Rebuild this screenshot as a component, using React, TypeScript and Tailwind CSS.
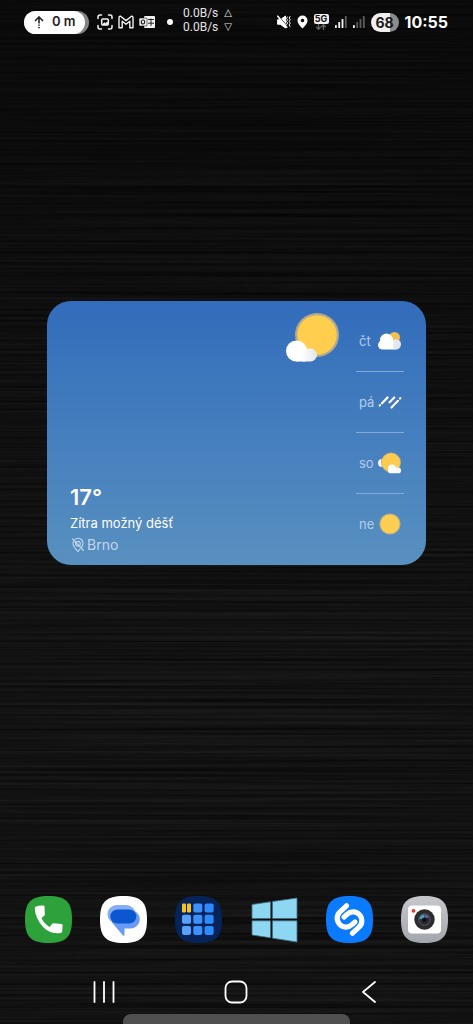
import type { ReactNode } from 'react';

function Wallpaper() {
  return (
    <svg className="absolute inset-0 -z-10 h-full w-full" aria-hidden="true">
      <defs>
        <filter id="brushed" x="0" y="0" width="100%" height="100%" colorInterpolationFilters="sRGB">
          <feTurbulence type="fractalNoise" baseFrequency="0.002 0.35" numOctaves="4" seed="7" />
          <feColorMatrix values="0.11 0 0 0 0.015  0.11 0 0 0 0.015  0.11 0 0 0 0.015  0 0 0 0 1" />
        </filter>
        <linearGradient id="shade" x1="0" y1="0" x2="0" y2="1">
          <stop offset="0" stopColor="#000" stopOpacity=".45" />
          <stop offset=".6" stopColor="#000" stopOpacity="0" />
        </linearGradient>
      </defs>
      <rect width="100%" height="100%" filter="url(#brushed)" />
      <rect width="100%" height="100%" fill="url(#shade)" />
    </svg>
  );
}

function CaptureIcon() {
  return (
    <svg width="16" height="16" viewBox="0 0 16 16" fill="none" stroke="#f2f2f2" strokeWidth="1.5" strokeLinecap="round">
      <path d="M1 4.5V3q0-2 2-2h1.5M11.500 1H13q2 0 2 2v1.500M15 11.500V13q0 2-2 2h-1.500M4.500 15H3q-2 0-2-2v-1.500" />
      <rect x="4.700" y="5" width="6.600" height="6" rx="1" />
      <path d="M6 10.200l1.500-1.500 1 .8 2-1.300v2z" fill="#f2f2f2" strokeWidth="1" />
    </svg>
  );
}

function MailIcon() {
  return (
    <svg width="16" height="14" viewBox="0 0 16 14" fill="none" stroke="#f2f2f2" strokeWidth="1.400" strokeLinejoin="round">
      <path d="M1 12.800V3Q1 1 2.600 1.300L8 5.600l5.400-4.300Q15 1 15 3v9.800h-3.200V6.300L8 9.300 4.200 6.300v6.500z" />
    </svg>
  );
}

function OutlookIcon() {
  return (
    <svg width="16" height="14" viewBox="0 0 16 14">
      <rect x="5" y="1" width="11" height="12" rx="1" fill="#f2f2f2" />
      <path d="M9 4.500h6M9 8.200h6M12 3.500v7.500" stroke="#222" strokeWidth="1" />
      <rect x="0" y="3" width="8" height="8" rx="1" fill="#f2f2f2" stroke="#111" strokeWidth=".6" />
      <ellipse cx="4" cy="7" rx="1.700" ry="2" fill="none" stroke="#222" strokeWidth="1.200" />
    </svg>
  );
}

function MuteIcon() {
  return (
    <svg width="14" height="14" viewBox="0 0 14 14" fill="none" stroke="#fff" strokeLinecap="round">
      <path d="M.8 4.800h2.400L8.500 1v12L3.200 9.200H.8z" fill="#fff" />
      <path d="M1.700 1l9 10.800" stroke="#111" strokeWidth="1" />
      <path d="M.8 1.200l9 11" strokeWidth="1.500" />
      <path d="M10.300 2l-.8 1.300 1 1.500-1 1.600 1 1.600-.8 1.500M13 1.500l-.8 1.600 1 1.700-1 1.700 1 1.700-1 1.700.8 1.600" strokeWidth="1" />
    </svg>
  );
}

function PinIcon() {
  return (
    <svg width="11" height="14" viewBox="0 0 11 14">
      <path fill="#fff" fillRule="evenodd" d="M5.500.5a5 5 0 0 1 5 5c0 3.200-3.300 6.300-5 8-1.700-1.700-5-4.800-5-8a5 5 0 0 1 5-5zm0 3.200a1.800 1.800 0 1 0 0 3.600 1.800 1.800 0 0 0 0-3.600z" />
    </svg>
  );
}

function NetworkBadge() {
  return (
    <span className="flex w-[15px] flex-col items-center">
      <span className="h-[10px] w-full rounded-xs bg-[#f2f2f2] text-center text-[9px] leading-[10px] font-bold text-[#111]">5G</span>
      <svg width="12" height="6" viewBox="0 0 12 6" fill="none" stroke="#666" strokeWidth="1.300">
        <path d="M3.500 0v5M1.200 3l2.300 2.300L5.800 3M8.500 6V1M6.200 3l2.300-2.300L10.800 3" />
      </svg>
    </span>
  );
}

function SignalIcon({ level }: { level: number }) {
  const bars = [3, 6, 9, 12];
  return (
    <svg width="12" height="12" viewBox="0 0 12 12">
      {bars.map((h, i) => (
        <rect key={h} x={i * 3.300} y={12 - h} width="1.800" height={h} rx=".6" fill={i < level ? '#f5f5f5' : '#5c5c5c'} />
      ))}
    </svg>
  );
}

function StatusBar() {
  return (
    <header className="flex h-11 items-center justify-between pr-[25px] pl-6 text-white">
      <div className="flex items-center">
        <div className="rounded-full bg-[#858585] pr-1">
          <div className="flex h-[23px] w-[61px] items-center gap-2 rounded-full bg-white pl-2.5 text-[#222]">
            <svg width="10" height="13" viewBox="0 0 10 13" fill="none" stroke="#222" strokeWidth="1.600">
              <path d="M1 5l4-4 4 4M5 1.500v6" />
              <path d="M5 8.500v1.300M5 11v1.300" />
            </svg>
            <span className="text-[13px] font-semibold whitespace-nowrap">0 m</span>
          </div>
        </div>
        <div className="ml-2 flex items-center gap-[5px]">
          <CaptureIcon />
          <MailIcon />
          <OutlookIcon />
        </div>
        <span className="mr-2.5 ml-3 size-1.5 rounded-full bg-white" />
        <div className="pb-1 font-[Roboto,sans-serif] text-[12px] leading-[14px] whitespace-nowrap text-[#e4e4e4]">
          <div className="flex gap-1.5">0.0B/s <span className="font-['DejaVu_Sans',sans-serif] text-[10px]">△</span></div>
          <div className="flex gap-1.5">0.0B/s <span className="font-['DejaVu_Sans',sans-serif] text-[10px]">▽</span></div>
        </div>
      </div>
      <div className="flex items-center gap-1.5">
        <MuteIcon />
        <PinIcon />
        <NetworkBadge />
        <SignalIcon level={3} />
        <SignalIcon level={1} />
        <span className="flex h-[19px] w-7 items-center justify-center rounded-full bg-linear-to-r from-[#f0f0f0] from-68% to-[#8c8c8c] to-68% text-[14px] font-bold text-[#1a1a1a]">68</span>
        <time className="text-[16px] font-bold">10:55</time>
      </div>
    </header>
  );
}

function PartlySunny() {
  return (
    <svg width="56" height="54" viewBox="-1 1 56 54">
      <defs>
        <linearGradient id="puff" x1="0" y1="0" x2="1" y2="0">
          <stop offset="0" stopColor="#fff" />
          <stop offset="1" stopColor="#e2e5e8" />
        </linearGradient>
      </defs>
      <circle cx="32" cy="25" r="22" fill="#b3a98c" />
      <circle cx="32" cy="25" r="19.800" fill="#ffce4f" />
      <circle cx="11.500" cy="41" r="10.500" fill="#fff" />
      <path d="M11.500 41h9v10.500h-9z" fill="#fff" />
      <path d="M18.500 43a6.500 6.500 0 0 1 7-4.500 6.500 6.500 0 0 1 0 13h-8.500z" fill="url(#puff)" />
    </svg>
  );
}

function CloudyIcon() {
  return (
    <svg width="24" height="24" viewBox="0 0 24 24">
      <circle cx="16.500" cy="8.500" r="5.500" fill="#efc152" />
      <circle cx="8.500" cy="11" r="6.500" fill="#fff" />
      <rect x="0" y="11.500" width="20" height="9" rx="4.500" fill="#fff" />
      <path d="M15.500 11a5 5 0 0 1 7.500 4c0 3.500-2.500 5.500-5 5.500h-3z" fill="#e4e8ee" />
    </svg>
  );
}

function RainIcon() {
  return (
    <svg width="24" height="24" viewBox="0 0 24 24" stroke="#fff" strokeWidth="2.200" strokeLinecap="round">
      <path d="M1.700 15.500l.3-.3M4 13.300l5.500-5.800M11.500 12.300l1.800-1.800M14.300 9.500l2-2M13.500 17.500l2.300-2.400M17 13.800l3-3M22 8.500l.3-.3" />
    </svg>
  );
}

function SunCloudIcon() {
  return (
    <svg width="24" height="24" viewBox="0 0 24 24">
      <circle cx="4" cy="12" r="4" fill="#f2f4f5" />
      <circle cx="13" cy="11.500" r="10" fill="#b9ac85" />
      <circle cx="13" cy="11.500" r="9.200" fill="#fdcb4f" />
      <circle cx="14" cy="17.500" r="4" fill="#fff" />
      <rect x="10" y="16.500" width="13" height="5.800" rx="2.900" fill="#fff" />
    </svg>
  );
}

function SunIcon() {
  return (
    <svg width="24" height="24" viewBox="0 0 24 24">
      <circle cx="12" cy="12" r="10.600" fill="#b3ac8c" />
      <circle cx="12" cy="12" r="9.600" fill="#ffcd50" />
    </svg>
  );
}

const forecast: { day: string; icon: ReactNode }[] = [
  { day: 'čt', icon: <CloudyIcon /> },
  { day: 'pá', icon: <RainIcon /> },
  { day: 'so', icon: <SunCloudIcon /> },
  { day: 'ne', icon: <SunIcon /> },
];

function WeatherWidget() {
  return (
    <section className="mx-[47px] flex rounded-3xl bg-linear-to-b from-[#326cbb] to-[#5890bf] py-2.5 pr-[22px] pl-[23px]">
      <div className="flex flex-1 flex-col justify-end gap-0.5 text-white">
        <p className="text-[22px] leading-7 font-semibold">17°</p>
        <p className="text-[13px] leading-5">Zítra možný déšť</p>
        <p className="flex items-center gap-0.5 text-[14px] leading-5 text-[#c3d7ec]">
          <svg width="15" height="16" viewBox="0 0 15 16" fill="none" stroke="#c3d7ec" strokeWidth="1.100" strokeLinecap="round">
            <path d="M4.500 2.800a5 5 0 0 1 8.500 3.700c0 1.500-.8 3-1.800 4.400M10 12.200L8 14.500c-2.300-2.300-5-5-5-8 0-.8.200-1.500.5-2.100" />
            <circle cx="8" cy="6.700" r="2.300" />
            <path d="M2.500 1.800l11 11.700" />
          </svg>
          Brno
        </p>
      </div>
      <div className="mr-4">
        <PartlySunny />
      </div>
      <ul className="w-12">
        {forecast.map(({ day, icon }) => (
          <li key={day} className="flex h-[61px] items-center justify-between border-b border-[#82a9d8] pr-0.5 pl-[3px] last:border-transparent">
            <span className="text-[13px] leading-5 text-[#b5cdec]">{day}</span>
            {icon}
          </li>
        ))}
      </ul>
    </section>
  );
}

const squircle = 'M23.500 0C41 0 47 6 47 23.500S41 47 23.500 47 0 41 0 23.500 6 0 23.500 0z';

function PhoneIcon() {
  return (
    <svg width="47" height="47" viewBox="0 0 47 47">
      <path d={squircle} fill="#2da23a" />
      <path d="M11 10.500q3.500-1.500 7.500-1 1 0 1 1l.3 8q0 1-.8 1.500l-2.500 2q2.500 5.500 8 9l2.500-3q.7-.8 1.700-.7l7.800.8q1.200.2 1.100 1.300l-.4 6q-.1 1.400-1.500 1.700-9.500 1.500-17.200-5.600Q10 22 9.800 12.500q0-1.500 1.200-2z" fill="#fff" />
    </svg>
  );
}

function MessagesIcon() {
  return (
    <svg width="47" height="47" viewBox="0 0 47 47">
      <path d={squircle} fill="#fff" />
      <rect x="7.500" y="9" width="28" height="18.500" rx="9.200" fill="#86adf7" />
      <path d="M19 14h11.500a9.200 9.200 0 0 1 0 18.500H24.500v6.500q-.4 1.400-1.500.4L11.500 26z" fill="#6a9af7" />
      <rect x="10.300" y="13.500" width="26" height="14" rx="7" fill="#0b57d0" />
    </svg>
  );
}

function GridIcon() {
  const cells = [1, 2, 3, 4, 5, 6, 7, 8];
  const blues = ['#58a0fa', '#3c91fc', '#2d8bff'];
  return (
    <svg width="47" height="47" viewBox="0 0 47 47">
      <path d={squircle} fill="#06245a" />
      <rect x="7" y="7.500" width="4" height="9" rx="1.200" fill="#f8c21b" />
      <rect x="12" y="7.500" width="4" height="9" rx="1.200" fill="#f8c21b" />
      {cells.map(i => (
        <rect key={i} x={7 + (i % 3) * 11.300} y={7.500 + Math.floor(i / 3) * 11.200} width="9" height="9" rx="1.800" fill={blues[i % 3]} />
      ))}
    </svg>
  );
}

function WindowsIcon() {
  return (
    <svg width="47" height="47" viewBox="0 0 47 47" fill="#8ed7f2" stroke="#3f6f82" strokeWidth=".8">
      <path d="M1 8.500l18.500-2.700v16.700H1zM21.500 5.500L46 2v20.500H21.500zM1 24.800h18.500v17L1 39zM21.500 24.800H46V46l-24.500-3.800z" />
    </svg>
  );
}

function ShazamIcon() {
  return (
    <svg width="47" height="47" viewBox="0 0 47 47">
      <path d={squircle} fill="#0a7bff" />
      <g fill="none" stroke="#fff" strokeWidth="5.200" strokeLinecap="round">
        <path d="M20.500 9.800l-6.500 6a8.800 8.800 0 0 0 12 12.900l3-2.800" />
        <path d="M26.500 37.200l6.500-6a8.800 8.800 0 0 0-12-12.900l-3 2.800" />
      </g>
    </svg>
  );
}

function CameraIcon() {
  return (
    <svg width="47" height="47" viewBox="0 0 47 47">
      <defs>
        <linearGradient id="camera-bg" x1="0" y1="0" x2="0" y2="1">
          <stop offset="0" stopColor="#c6c8cc" />
          <stop offset="1" stopColor="#a3a6ac" />
        </linearGradient>
      </defs>
      <path d={squircle} fill="url(#camera-bg)" />
      <rect x="7" y="9.500" width="33" height="28" rx="4" fill="#fff" />
      <circle cx="12.500" cy="14.800" r="1.900" fill="#e8332c" />
      <circle cx="23.500" cy="23.500" r="10.200" fill="#2b2b2d" />
      <circle cx="23.500" cy="23.500" r="6.300" fill="#50505a" />
      <circle cx="23.500" cy="23.500" r="5.200" fill="#2b2a35" />
      <path d="M18.500 23.500a5 5 0 0 1 4.500-5l.5 3.500z" fill="#3aa4bd" />
      <path d="M23 18.500a5 5 0 0 1 5 3l-4.500 1z" fill="#6b5a9c" />
      <circle cx="23.500" cy="23.800" r="2.200" fill="#0c0c12" />
    </svg>
  );
}

const apps: { name: string; icon: ReactNode }[] = [
  { name: 'Telefon', icon: <PhoneIcon /> },
  { name: 'Zprávy', icon: <MessagesIcon /> },
  { name: 'Aplikace', icon: <GridIcon /> },
  { name: 'Windows', icon: <WindowsIcon /> },
  { name: 'Shazam', icon: <ShazamIcon /> },
  { name: 'Fotoaparát', icon: <CameraIcon /> },
];

function NavigationBar() {
  return (
    <nav className="grid grid-cols-3 items-center px-[38px] pb-2.5">
      <button type="button" aria-label="Poslední" className="flex justify-center">
        <svg width="22" height="22" viewBox="0 0 22 22" stroke="#fff" strokeWidth="1.800" strokeLinecap="round">
          <path d="M1.500 1v20M11 1v20M20.500 1v20" />
        </svg>
      </button>
      <button type="button" aria-label="Domů" className="flex justify-center">
        <svg width="24" height="24" viewBox="0 0 24 24" fill="none" stroke="#fff" strokeWidth="1.800">
          <rect x="1.500" y="1.500" width="21" height="21" rx="6.500" />
        </svg>
      </button>
      <button type="button" aria-label="Zpět" className="flex justify-center">
        <svg width="16" height="22" viewBox="0 0 16 22" fill="none" stroke="#fff" strokeWidth="1.800" strokeLinecap="round" strokeLinejoin="round">
          <path d="M14 1L2 11l12 10" />
        </svg>
      </button>
    </nav>
  );
}

export default function App() {
  return (
    <div className="relative isolate flex min-h-screen flex-col overflow-hidden bg-[#0d0d0d] font-[Inter,sans-serif]">
      <Wallpaper />
      <StatusBar />
      <main className="flex-1 pt-[257px]">
        <WeatherWidget />
      </main>
      <div className="flex justify-between px-[25px] pb-[37px]">
        {apps.map(({ name, icon }) => (
          <button key={name} type="button" aria-label={name}>{icon}</button>
        ))}
      </div>
      <NavigationBar />
      <div className="mx-auto h-2.5 w-[48%] rounded-t-lg bg-[#505050]" />
    </div>
  );
}
